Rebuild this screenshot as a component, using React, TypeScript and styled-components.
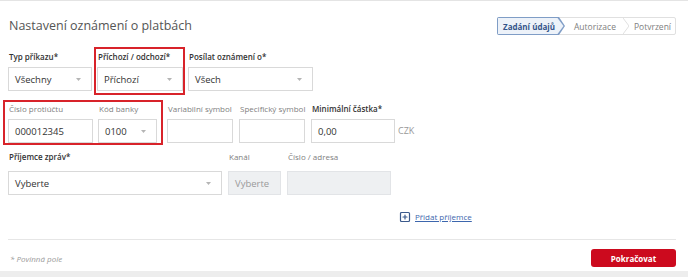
import styled, { createGlobalStyle } from 'styled-components';
import { SquarePlus } from 'lucide-react';

const GlobalStyle = createGlobalStyle`
  html, body {
    margin: 0;
    padding: 0;
    background: #fff;
  }
  body {
    font-family: "Open Sans", "Liberation Sans", sans-serif;
    color: #333;
  }
`

type FieldProps = {
  label: string
  required?: boolean
  width: number
  gap?: number
  children: React.ReactNode
}

const Field = ({ label, required, width, gap = 4, children }: FieldProps) => (
  <FieldBox $w={width}>
    <Label $strong={required} $gap={gap}>{label}</Label>
    {children}
  </FieldBox>
)

const Caret = () => (
  <svg width="5" height="3" viewBox="0 0 5 3">
    <path d="M0 0 L5 0 L2.5 3 Z" fill="#b5b5b5" />
  </svg>
)

const Select = ({ value }: { value: string }) => (
  <SelectBox>
    <span>{value}</span>
    <Caret />
  </SelectBox>
)

export default function App() {
  return (
    <>
      <GlobalStyle />
      <Page>
        <Header>
          <Title>Nastavení oznámení o platbách</Title>
          <Stepper>
            <ActiveStep><span>Zadání údajů</span></ActiveStep>
            <Step>Autorizace</Step>
            <Chevron width="6" height="16" viewBox="0 0 6 16">
              <polyline points="0,0 6,8 0,16" fill="none" stroke="#e0e0e0" strokeWidth="1" />
            </Chevron>
            <LastStep>Potvrzení</LastStep>
          </Stepper>
        </Header>

        <Row $top={14}>
          <Field label="Typ příkazu*" required width={84}>
            <Select value="Všechny" />
          </Field>
          <Highlight $t={-4} $r={-2} $b={-4} $l={-3}>
            <Field label="Příchozí / odchozí*" required width={86}>
              <Select value="Příchozí" />
            </Field>
          </Highlight>
          <Field label="Posílat oznámení o*" required width={125}>
            <Select value="Všech" />
          </Field>
        </Row>

        <Row $top={12} $gap={6}>
          <Highlight $t={-3} $r={-6} $b={-2} $l={-5}>
            <Group>
              <Field label="Číslo protiúčtu" width={85}>
                <Input>000012345</Input>
              </Field>
              <Field label="Kód banky" width={59}>
                <Select value="0100" />
              </Field>
            </Group>
          </Highlight>
          <Spacer />
          <Field label="Variabilní symbol" width={66}>
            <Input />
          </Field>
          <Field label="Specifický symbol" width={66}>
            <Input />
          </Field>
          <Field label="Minimální částka*" required width={84}>
            <Input>0,00</Input>
          </Field>
          <Currency>CZK</Currency>
        </Row>

        <Row $top={8} $gap={6}>
          <Field label="Příjemce zpráv*" required width={214} gap={8}>
            <Select value="Vyberte" />
          </Field>
          <Field label="Kanál" width={53} gap={8}>
            <Input $disabled>Vyberte</Input>
          </Field>
          <Field label="Číslo / adresa" width={104} gap={8}>
            <Input $disabled />
          </Field>
        </Row>

        <AddRow>
          <AddLink>
            <SquarePlus size={12} strokeWidth={2.4} color="#3b5a8c" />
            <span>Přidat příjemce</span>
          </AddLink>
        </AddRow>

        <Footer>
          <Note>* Povinná pole</Note>
          <Button>Pokračovat</Button>
        </Footer>
        <Band />
      </Page>
    </>
  );
}

const Page = styled.div`
  border-top: 1px solid #e4e4e4;
  padding: 0 12px 0 8px;
`
const Header = styled.div`
  display: flex;
  align-items: center;
  justify-content: space-between;
  height: 22px;
  margin-top: 14px;
`
const Title = styled.h1`
  margin: 0 0 0 1px;
  font-size: 12.5px;
  font-weight: 400;
  color: #555;
  line-height: 22px;
`
const Stepper = styled.div`
  display: flex;
  align-items: center;
  height: 16px;
  border: 1px solid #e0e0e0;
  border-radius: 2px;
  font-size: 8.5px;
  color: #808080;
`
const ActiveStep = styled.div`
  position: relative;
  height: 18px;
  margin: -1px 0 -1px -1px;
  padding: 0 10px 0 6px;
  display: flex;
  align-items: center;
  background: #7f9dc6;
  border-radius: 2px 0 0 2px;
  font-size: 8px;
  clip-path: polygon(0 0, calc(100% - 6px) 0, 100% 50%, calc(100% - 6px) 100%, 0 100%);

  &::before {
    content: '';
    position: absolute;
    inset: 1px 1.5px 1px 1px;
    background: #edf2f9;
    clip-path: polygon(0 0, calc(100% - 6px) 0, 100% 50%, calc(100% - 6px) 100%, 0 100%);
  }

  span {
    position: relative;
    font-weight: 700;
    color: #34548a;
  }
`
const Step = styled.div`
  padding: 0 7px 0 9px;
`
const LastStep = styled.div`
  padding: 0 4px 0 5px;
`
const Chevron = styled.svg`
  display: block;
`
const Row = styled.div<{ $top: number; $gap?: number }>`
  display: flex;
  align-items: flex-end;
  gap: ${p => p.$gap ?? 5}px;
  margin-top: ${p => p.$top}px;
`
const Group = styled.div`
  display: flex;
  gap: 5px;
`
const Spacer = styled.div`
  width: 4px;
  margin-left: -6px;
`
const Highlight = styled.div<{ $t: number; $r: number; $b: number; $l: number }>`
  position: relative;

  &::after {
    content: '';
    position: absolute;
    top: ${p => p.$t}px;
    right: ${p => p.$r}px;
    bottom: ${p => p.$b}px;
    left: ${p => p.$l}px;
    border: 2px solid #d8232a;
    pointer-events: none;
  }
`
const FieldBox = styled.div<{ $w: number }>`
  width: ${p => p.$w}px;
  display: flex;
  flex-direction: column;
`
const Label = styled.label<{ $strong?: boolean; $gap: number }>`
  font-size: 8px;
  line-height: 12px;
  margin: 0 0 ${p => p.$gap}px 1px;
  white-space: nowrap;
  font-weight: ${p => (p.$strong ? 600 : 400)};
  color: ${p => (p.$strong ? '#333' : '#808080')};
`
const SelectBox = styled.div`
  height: 24px;
  box-sizing: border-box;
  border: 1px solid #d9d9d9;
  background: #fff;
  display: flex;
  align-items: center;
  justify-content: space-between;
  padding: 0 10px 0 6px;
  font-size: 9.5px;
  color: #333;
`
const Input = styled.div<{ $disabled?: boolean }>`
  height: 24px;
  box-sizing: border-box;
  border: 1px solid ${p => (p.$disabled ? '#e2e4e7' : '#d9d9d9')};
  background: ${p => (p.$disabled ? '#eef0f2' : '#fff')};
  display: flex;
  align-items: center;
  padding: 0 6px;
  font-size: 9.5px;
  color: ${p => (p.$disabled ? '#9a9a9a' : '#333')};
`
const Currency = styled.span`
  font-size: 9px;
  color: #999;
  line-height: 24px;
  margin-left: -3px;
`
const AddRow = styled.div`
  display: flex;
  margin-top: 16px;
  padding-left: 391px;
`
const AddLink = styled.a`
  display: flex;
  align-items: center;
  gap: 4px;
  font-size: 8px;
  line-height: 12px;
  color: #3d66ad;
  cursor: pointer;

  span {
    text-decoration: underline;
  }
`
const Footer = styled.div`
  display: flex;
  align-items: center;
  justify-content: space-between;
  margin-top: 16px;
  border-top: 1px solid #e6e6e6;
  padding-top: 9px;
`
const Note = styled.span`
  font-size: 8px;
  font-style: italic;
  color: #9a9a9a;
  margin-left: 2px;
`
const Button = styled.button`
  width: 85px;
  height: 18px;
  border: none;
  border-radius: 3px;
  background: #cc0a1e;
  color: #fff;
  font-family: inherit;
  font-size: 8px;
  font-weight: 700;
  padding: 0;
`
const Band = styled.div`
  height: 10px;
  margin: 4px -12px 0 -8px;
  background: #ededed;
`
